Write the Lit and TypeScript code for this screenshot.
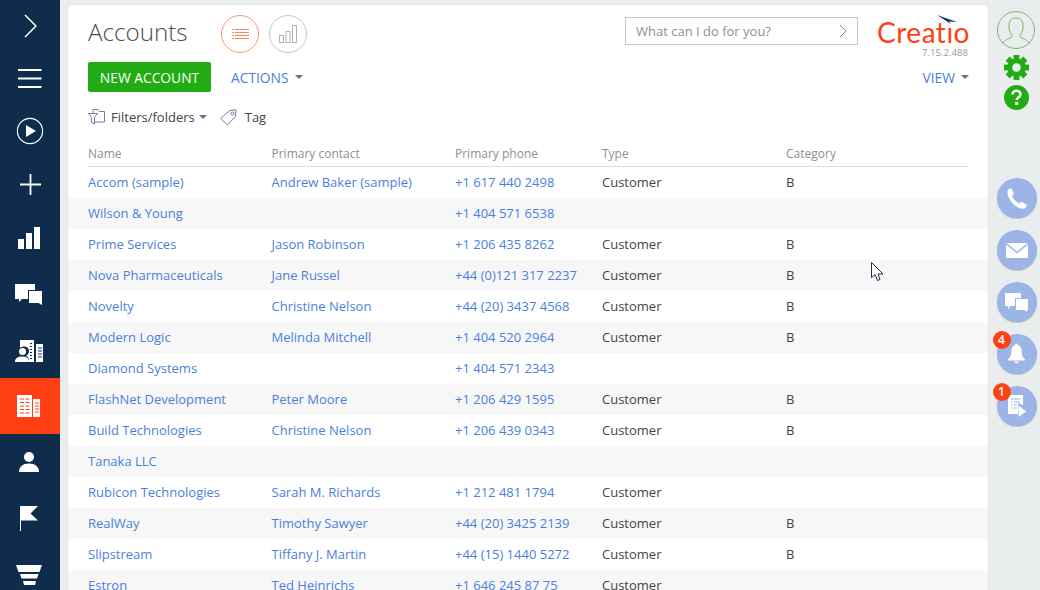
import { LitElement, html, css, svg } from "lit";
import { customElement } from "lit/decorators.js";

type Row = [string, string, string, string, string];
const rows: Row[] = [
  ["Accom (sample)", "Andrew Baker (sample)", "+1 617 440 2498", "Customer", "B"],
  ["Wilson & Young", "", "+1 404 571 6538", "", ""],
  ["Prime Services", "Jason Robinson", "+1 206 435 8262", "Customer", "B"],
  ["Nova Pharmaceuticals", "Jane Russel", "+44 (0)121 317 2237", "Customer", "B"],
  ["Novelty", "Christine Nelson", "+44 (20) 3437 4568", "Customer", "B"],
  ["Modern Logic", "Melinda Mitchell", "+1 404 520 2964", "Customer", "B"],
  ["Diamond Systems", "", "+1 404 571 2343", "", ""],
  ["FlashNet Development", "Peter Moore", "+1 206 429 1595", "Customer", "B"],
  ["Build Technologies", "Christine Nelson", "+1 206 439 0343", "Customer", "B"],
  ["Tanaka LLC", "", "", "", ""],
  ["Rubicon Technologies", "Sarah M. Richards", "+1 212 481 1794", "Customer", ""],
  ["RealWay", "Timothy Sawyer", "+44 (20) 3425 2139", "Customer", "B"],
  ["Slipstream", "Tiffany J. Martin", "+44 (15) 1440 5272", "Customer", "B"],
  ["Estron", "Ted Heinrichs", "+1 646 245 87 75", "Customer", ""],
];

const navIcons = [
  svg`<svg width="14" height="24" viewBox="0 0 14 24"><path d="M2 1 13 12 2 23" fill="none" stroke="#fff" stroke-width="1.5"/></svg>`,
  svg`<svg width="24" height="19" viewBox="0 0 24 19"><path d="M0 1H23.500M0 9.500H23.500M0 18H23.500" stroke="#fff" stroke-width="1.800"/></svg>`,
  svg`<svg width="28" height="28" viewBox="0 0 28 28"><circle cx="14" cy="14" r="12.600" fill="none" stroke="#fff" stroke-width="1.200"/><path d="M10 8 20 14 10 20Z" fill="#fff"/></svg>`,
  svg`<svg width="21" height="21" viewBox="0 0 21 21"><path d="M0 10.500H21M10.500 0V21" stroke="#fff" stroke-width="1.800"/></svg>`,
  svg`<svg width="22" height="22" viewBox="0 0 22 22"><path fill="#fff" d="M0 12H6V22H0ZM8 6H14V22H8ZM16 0H22V22H16Z"/></svg>`,
  svg`<svg width="27" height="21" viewBox="0 0 27 21"><path fill="#fff" d="M0 0H20V6H13V15H7L4 18V15H0ZM14 7H27V19H27V21L23.500 19H14Z"/></svg>`,
  svg`<svg width="28" height="22" viewBox="0 0 28 22"><path fill="#fff" d="M5 0H19V22H14C14 18 13 17 11 16 13 15 14 13 14 11 14 8 12 6.500 9.500 6.500 7.500 6.500 6 7 5 8Z"/><path fill="#fff" d="M21 4H28V22H21Z"/><path stroke="#0f2c4d" stroke-width="1" d="M15 3.500H17M15 6.500H17M15 9.500H17M15 12.500H17M15 15.500H17M15 18.500H17M23 8H27M23 11H27M23 14H27M23 17H27"/><circle cx="7.500" cy="11.500" r="3.500" fill="#fff"/><path fill="#fff" d="M0 22C0 18 3 16.500 7 16.500S14 18 14 22Z"/></svg>`,
  svg`<svg width="23" height="22" viewBox="0 0 23 22"><path fill="#fff" d="M0 0H15V22H0ZM16 4H23V22H16Z"/><path stroke="#ff4013" stroke-width="1.200" fill="none" stroke-dasharray="4 1.400" d="M3 4H13M3 7.500H13M3 11H13M3 14.500H13M3 18H13"/><path stroke="#ff4013" stroke-width="1" fill="none" d="M18 8H22M18 11H22M18 14H22M18 17H22"/></svg>`,
  svg`<svg width="20" height="20" viewBox="0 0 20 20"><circle cx="10" cy="5" r="5" fill="#fff"/><path fill="#fff" d="M0 20C0 14.500 4 11.500 10 11.500S20 14.500 20 20Z"/></svg>`,
  svg`<svg width="18" height="25" viewBox="0 0 18 25"><path fill="#fff" d="M0 0H1V25H0ZM1 0H18L10.500 7.500 18 14.500H1Z"/></svg>`,
  svg`<svg width="26" height="20" viewBox="0 0 26 20"><path fill="#fff" d="M0 0H26L23.500 7H2.500ZM4 9H22.500L21 13.500H5.500ZM7 16H20L19 20H8Z"/></svg>`,
];

const gearTeeth = [0, 45, 90, 135, 180, 225, 270, 315];

const rightIcons = [
  svg`<svg width="20" height="21" viewBox="0 0 20 21"><path fill="#fff" d="M1 1.500 4 0 7 5.500 5 7.500C6 11 9 14 12.500 15.500L14.500 13.500 20 17 18.500 20C16 21.500 11.500 20.500 7.500 17 2.500 12.500 -1 6 1 1.500Z"/></svg>`,
  svg`<svg width="22" height="15" viewBox="0 0 22 15"><rect width="22" height="15" fill="#fff"/><path d="M0 .5 11 9.500 22 .5" fill="none" stroke="#9db5e6" stroke-width="1.400"/></svg>`,
  svg`<svg width="23" height="19" viewBox="0 0 23 19"><path fill="#fff" d="M0 0H16V5H10V13H5L3 16V13H0Z"/><path fill="#fff" d="M11 6H23V17H22V19L19 17H11Z"/></svg>`,
  svg`<svg width="17" height="22" viewBox="0 0 18 22"><path fill="#fff" d="M9 0C10 0 10.500 .8 10.500 1.500 13.500 2.300 14.500 5 14.500 8 14.500 12 15.500 14.500 18 16.500V18H0V16.500C2.500 14.500 3.500 12 3.500 8 3.500 5 4.500 2.300 7.500 1.500 7.500 .8 8 0 9 0ZM6.500 19H11.500C11 21.500 7 21.500 6.500 19Z"/></svg>`,
  svg`<svg width="18" height="22" viewBox="0 0 18 22"><path fill="#fff" d="M0 0H15V10L10 8V19H0Z"/><path fill="#fff" d="M10.500 10.500 18 16.500 10.500 22Z"/><path stroke="#9db5e6" d="M3 4H12M3 7H4.500M6 7H12M3 10H4.500M6 10H9M3 13H4.500M6 13H9"/></svg>`,
];

@customElement("app-root")
export class AppRoot extends LitElement {
  static styles = css`
    :host {
      display: flex;
      width: 1040px;
      height: 590px;
      overflow: hidden;
      background: #e9edee;
      font-family: "Open Sans", sans-serif;
      font-size: 13px;
      color: #444;
      position: relative;
    }
    .nav {
      flex: 0 0 60px;
      background: #0f2c4d;
      display: grid;
      grid-template-rows: 52px 52px 53px 54px 54px 58px 55px 56px 55px 58px 56px;
      height: 600px;
    }
    .nav div { display: flex; align-items: center; justify-content: center; }
    .nav .l { padding-right: 3px; }
    .nav .active { background: #ff4013; }
    .card {
      flex: 0 0 920px;
      margin: 5px 0 0 8px;
      background: #fff;
      border-radius: 4px 4px 0 0;
      display: flex;
      flex-direction: column;
      height: 600px;
      box-shadow: 0 0 2px rgba(0, 0, 0, 0.08);
    }
    .r1 {
      display: flex;
      height: 38px;
      margin: 10px 19px 0 20px;
    }
    h1 {
      margin: 0;
      width: 133px;
      font-weight: 300;
      font-size: 24.2px;
      line-height: 33px;
      color: #4d4d4d;
    }
    .round {
      width: 38px;
      height: 38px;
      box-sizing: border-box;
      border-radius: 50%;
      border: 1px solid #c9c9c9;
      display: flex;
      align-items: center;
      justify-content: center;
      margin-right: 10px;
    }
    .round.on { border-color: #f79c6e; }
    .search {
      margin: 2px 0 0 auto;
      width: 233px;
      height: 28px;
      box-sizing: border-box;
      border: 1px solid #c6c6c6;
      display: flex;
      align-items: center;
      justify-content: space-between;
      padding: 0 10px;
      color: #8f8f8f;
      font-size: 13px;
    }
    .logo {
      margin-left: 20px;
      width: 91px;
      height: 38px;
      display: flex;
      flex-direction: column;
      align-items: flex-end;
      position: relative;
    }
    .word {
      font-family: "Lato", sans-serif;
      font-weight: 400;
      font-size: 28px;
      line-height: 28px;
      letter-spacing: 0.5px;
      color: #ff4013;
      margin: 3px -1px 0 0;
      white-space: nowrap;
    }
    .dart { position: absolute; left: 57px; top: 0; }
    .ver { font-size: 9.6px; color: #9a9a9a; line-height: 12px; margin-top: 1px; margin-right: 1px; }
    .r2 {
      display: flex;
      align-items: center;
      height: 30px;
      margin: 9px 19px 0 20px;
    }
    .btn {
      width: 123px;
      height: 30px;
      background: #22ac14;
      color: #fff;
      border-radius: 2px;
      display: flex;
      align-items: center;
      justify-content: center;
      font-size: 13.8px;
    }
    .act { color: #4b7fdc; font-size: 13.8px; display: flex; align-items: center; gap: 6px; }
    .act.a1 { margin-left: 20px; }
    .act.a2 { margin-left: auto; }
    .caret {
      width: 0;
      height: 0;
      border: 4.5px solid transparent;
      border-top: 4.5px solid #66708f;
      border-bottom: 0;
    }
    .r3 {
      display: flex;
      align-items: center;
      height: 30px;
      margin: 10px 19px 0 20px;
      color: #444;
    }
    .r3 svg { flex: none; }
    .ff { margin: 0 4px 0 6px; }
    .tag { margin: 0 0 0 13px; }
    .tagt { margin-left: 8px; }
    .row {
      display: grid;
      grid-template-columns: 183.5px 183.5px 147px 184px 1fr;
      height: 31px;
      box-sizing: border-box;
      align-items: center;
      padding: 0 19px 2px 20px;
      flex: none;
      white-space: nowrap;
    }
    .rows .row:nth-child(even) { background: #f7f7f7; }
    .row a { color: #4b7fdc; }
    .hd {
      height: 27px;
      margin: 8px 19px 0 20px;
      padding: 0;
      border-bottom: 1px solid #ddd;
      color: #8f8f8f;
      font-size: 12px;
    }
    .right {
      flex: 1;
      display: flex;
      flex-direction: column;
      align-items: center;
      padding: 11px 0 0 4px;
    }
    .gear { margin-top: 6px; height: 25px; }
    .help { margin-top: 5px; height: 25px; }
    .bub {
      width: 40px;
      height: 40px;
      border-radius: 50%;
      background: #9db5e6;
      box-shadow: 0 1px 1px rgba(0, 0, 0, 0.2);
      display: flex;
      align-items: center;
      justify-content: center;
      margin-bottom: 12px;
      position: relative;
    }
    .bubs { margin-top: 68px; display: flex; flex-direction: column; margin-left: 1px; }
    .badge {
      position: absolute;
      left: -4px;
      top: -3px;
      width: 18px;
      height: 18px;
      border-radius: 50%;
      background: #ff4013;
      color: #fff;
      font-size: 12px;
      font-weight: 600;
      line-height: 18px;
      text-align: center;
    }
    .cursor { position: absolute; left: 871px; top: 262px; }
  `;

  render() {
    return html`
      <div class="nav">
        ${navIcons.map(
          (i, n) => html`<div class="${n === 7 ? "active " : ""}${n >= 4 ? "l" : ""}">${i}</div>`
        )}
      </div>
      <div class="card">
        <div class="r1">
          <h1>Accounts</h1>
          <div class="round on">
            <svg width="17" height="11" viewBox="0 0 17 11"><path d="M3 .5H17M3 3.500H17M3 6.500H17M3 9.500H17M0 .5H2M0 3.500H2M0 6.500H2M0 9.500H2" stroke="#f38c5a" stroke-width="1"/></svg>
          </div>
          <div class="round">
            <svg width="18" height="18" viewBox="0 0 18 18"><path d="M.5 10.500H4.500V17.500H.5ZM7 6.500H11V17.500H7ZM13.500 .5H17.500V17.500H13.500Z" fill="none" stroke="#b0b0b0"/></svg>
          </div>
          <div class="search">
            <span>What can I do for you?</span>
            <svg width="8" height="14" viewBox="0 0 8 14"><path d="M1 1 7 7 1 13" fill="none" stroke="#888" stroke-width="1"/></svg>
          </div>
          <div class="logo">
            <span class="word">Creatio</span>
            <svg class="dart" width="26" height="14" viewBox="0 0 26 14"><path d="M11 5H19V11H11Z" fill="#fff"/><path d="M2 0 22 7 14 6.500 16 9Z" fill="#16365c"/></svg>
            <span class="ver">7.15.2.488</span>
          </div>
        </div>
        <div class="r2">
          <div class="btn">NEW ACCOUNT</div>
          <div class="act a1">ACTIONS <span class="caret"></span></div>
          <div class="act a2">VIEW <span class="caret"></span></div>
        </div>
        <div class="r3">
          <svg width="17" height="16" viewBox="0 0 17 16"><path d="M5 4V.5H10L11.500 2.500H16.500V13H7M.5 4.500H9.500L6.500 8.500V15L3.500 13.500V8.500Z" fill="none" stroke="#7078a8"/></svg>
          <span class="ff">Filters/folders</span><span class="caret"></span>
          <svg class="tag" width="17" height="17" viewBox="0 0 17 17"><path d="M.8 9.500 9.500 1.500 16 .8 15.500 7.500 7.500 16Z" fill="none" stroke="#7078a8"/><circle cx="12.500" cy="4.500" r="1.500" fill="none" stroke="#7078a8"/></svg>
          <span class="tagt">Tag</span>
        </div>
        <div class="row hd">
          <span>Name</span><span>Primary contact</span><span>Primary phone</span><span>Type</span><span>Category</span>
        </div>
        <div class="rows">
          ${rows.map(
            (r) => html`<div class="row">
              <a>${r[0]}</a><a>${r[1]}</a><a>${r[2]}</a><span>${r[3]}</span><span>${r[4]}</span>
            </div>`
          )}
        </div>
      </div>
      <div class="right">
        <svg width="38" height="38" viewBox="0 0 38 38"><circle cx="19" cy="19" r="18.500" fill="none" stroke="#7fb86f"/><path d="M6 33C7 29 11 28 15 26 15 24 14 23 13 21 11.500 17 11.500 14 12.500 11 14 7.500 17 7 19 7S24 7.500 25.500 11C26.500 14 26.500 17 25 21 24 23 23 24 23 26 27 28 31 29 32 33" fill="none" stroke="#7fb86f"/></svg>
        <svg class="gear" width="25" height="25" viewBox="-12.500 -12.500 25 25"><circle r="6.800" fill="none" stroke="#22ac14" stroke-width="5"/>${gearTeeth.map(
          (a) => svg`<rect x="-2.900" y="-12.500" width="5.800" height="5" fill="#22ac14" transform="rotate(${a})"/>`
        )}</svg>
        <svg class="help" width="25" height="25" viewBox="0 0 25 25"><circle cx="12.500" cy="12.500" r="12.500" fill="#22ac14"/><path d="M8.500 9.500C8.500 4.500 16.500 4.500 16.500 9.500 16.500 12 13 12.500 12.700 15" fill="none" stroke="#fff" stroke-width="2.600"/><rect x="11.200" y="17" width="3" height="3" fill="#fff"/></svg>
        <div class="bubs">
          ${rightIcons.map(
            (i, n) => html`<div class="bub">
              ${i}${n === 3 ? html`<span class="badge">4</span>` : ""}${n === 4 ? html`<span class="badge">1</span>` : ""}
            </div>`
          )}
        </div>
      </div>
      <svg class="cursor" width="13" height="20" viewBox="0 0 13 20"><path d="M.5.5V15.500L4 12.500 6.500 18.500 9 17.500 7 12H12Z" fill="#fff" stroke="#1c3048"/></svg>
    `;
  }
}
